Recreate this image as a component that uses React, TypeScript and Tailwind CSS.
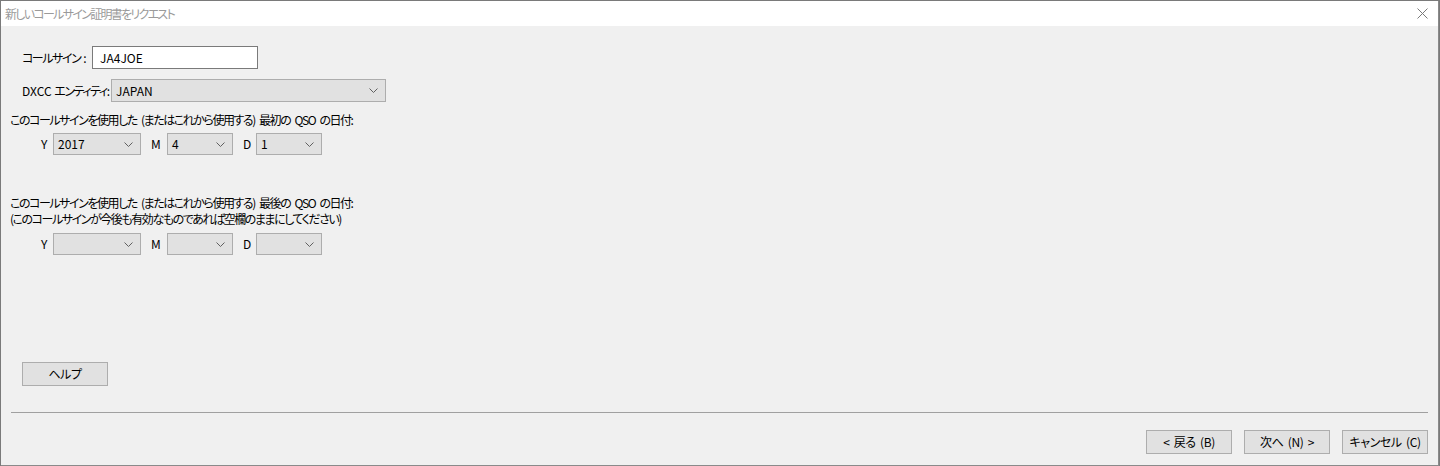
import React from "react";

const font = "[font-family:'Noto_Sans_CJK_JP','Noto_Sans',sans-serif] [font-feature-settings:'palt']";
// 日本語テキスト用の詰め
const jp = "tracking-[-1.45px] [word-spacing:3px]";

function Chevron() {
  return (
    <svg width="9" height="5" viewBox="0 0 9 5" className="shrink-0">
      <polyline points="0.5,0.5 4.5,4.5 8.5,0.5" fill="none" stroke="#606060" strokeWidth="1" />
    </svg>
  );
}

function Select({ width, value }: { width: string; value?: string }) {
  return (
    <div
      className={`${width} shrink-0 h-[22px] flex items-center justify-between pl-[4px] pr-[7px] bg-[#e1e1e1] border border-[#adadad]`}
    >
      <span className="leading-none">{value ?? ""}</span>
      <Chevron />
    </div>
  );
}

function DateRow({ y, m, d }: { y?: string; m?: string; d?: string }) {
  return (
    <div className="flex items-center h-[22px] pl-[31px]">
      <span className="w-[12px] shrink-0">Y</span>
      <Select width="w-[88px]" value={y} />
      <span className="w-[16px] ml-[10px] shrink-0">M</span>
      <Select width="w-[66px]" value={m} />
      <span className="w-[13px] ml-[10px] shrink-0">D</span>
      <Select width="w-[66px]" value={d} />
    </div>
  );
}

function Button({ label }: { label: string }) {
  return (
    <button className="w-[86px] h-[24px] bg-[#e1e1e1] border border-[#adadad] text-[12px] text-black leading-none whitespace-nowrap tracking-[-0.4px] [word-spacing:2px]">
      {label}
    </button>
  );
}

export default function App() {
  return (
    <div className={`w-[1440px] h-[466px] bg-[#7a7a7a] pt-px pl-px pr-px ${font} text-[12px] text-black`}>
      <div className="h-full flex flex-col bg-[#f0f0f0] border-r border-b border-[#8a8a8a]">
        {/* タイトルバー */}
        <div className="h-[25px] bg-white flex items-center justify-between pl-[4px] pr-[10px]">
          <span className="text-[#9a9a9a] text-[12px] tracking-[-1.7px]">新しいコールサイン証明書をリクエスト</span>
          <svg width="11" height="11" viewBox="0 0 11 11">
            <path d="M0.5 0.5 L10.5 10.5 M10.5 0.5 L0.5 10.5" stroke="#7a7a7a" strokeWidth="1" />
          </svg>
        </div>

        {/* 本文 */}
        <div className="flex flex-col pl-[9px] whitespace-nowrap">
          <div className="mt-[20px] flex items-center h-[23px] pl-[12px]">
            <span className="w-[70px] shrink-0">
              <span className={jp}>コールサイン</span>
              <span className="ml-[3px]">:</span>
            </span>
            <div className="w-[166px] shrink-0 h-[23px] bg-white border border-[#7a7a7a] flex items-center pl-[7px]">
              JA4JOE
            </div>
          </div>

          <div className="mt-[10px] flex items-center h-[23px] pl-[12px]">
            <span className="w-[89px] shrink-0">
              DXCC <span className={jp}>エンティティ</span>:
            </span>
            <Select width="w-[275px] h-[23px]" value="JAPAN" />
          </div>

          <div className={`mt-[10px] h-[16px] leading-[16px] ${jp}`}>
            このコールサインを使用した (またはこれから使用する) 最初の QSO の日付:
          </div>
          <div className="mt-[5px]">
            <DateRow y="2017" m="4" d="1" />
          </div>

          <div className={`mt-[40px] leading-[16px] ${jp}`}>
            <div>このコールサインを使用した (またはこれから使用する) 最後の QSO の日付:</div>
            <div>(このコールサインが今後も有効なものであれば空欄のままにしてください)</div>
          </div>
          <div className="mt-[6px]">
            <DateRow />
          </div>

          <div className="mt-[107px] pl-[12px]">
            <Button label="ヘルプ" />
          </div>
        </div>

        <div className="mt-[26px] mx-[10px] h-px bg-[#a0a0a0]" />

        <div className="mt-[17px] flex justify-end gap-[12px] pr-[10px]">
          <Button label="< 戻る (B)" />
          <Button label="次へ (N) >" />
          <Button label="キャンセル (C)" />
        </div>
      </div>
    </div>
  );
}
